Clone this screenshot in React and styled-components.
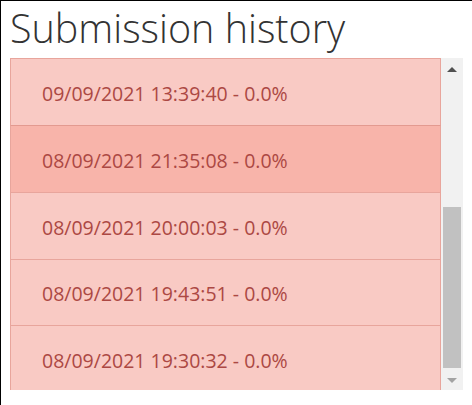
import React, { useLayoutEffect, useRef } from 'react';
import styled, { createGlobalStyle } from 'styled-components';

const GlobalStyle = createGlobalStyle`
  html, body {
    margin: 0;
    padding: 0;
    background: #ffffff;
  }
  body {
    font-family: 'Open Sans', 'Liberation Sans', sans-serif;
  }
`;

const Frame = styled.div`
  box-sizing: border-box;
  width: 472px;
  height: 405px;
  border-left: 1px solid #000;
  border-top: 1px solid #000;
  padding: 0 0 0 9px;
  background: #fff;
`;

const Title = styled.h1`
  box-sizing: border-box;
  margin: 0;
  height: 57px;
  padding-top: 2px;
  font-family: 'Open Sans', sans-serif;
  font-weight: 300;
  font-size: 39.5px;
  line-height: 50px;
  color: #333333;
  white-space: nowrap;
`;

const History = styled.div`
  display: flex;
  height: 332px;
  width: 453px;
`;

const List = styled.div`
  width: 431px;
  height: 100%;
  overflow-y: auto;
  scrollbar-width: none;
  &::-webkit-scrollbar {
    display: none;
  }
`;

const Item = styled.div`
  box-sizing: border-box;
  height: 66.8px;
  display: flex;
  align-items: center;
  padding: 3px 0 0 31px;
  border: 1px solid #e8a59c;
  border-bottom: 0;
  background: ${p => (p.active ? '#f8b4aa' : '#f9cac4')};
  border-top-color: ${p => (p.active ? '#e39a90' : '#e8a59c')};
  color: #ac4843;
  font-size: 19.5px;
  font-family: 'Open Sans', sans-serif;
  white-space: nowrap;
`;

const Scrollbar = styled.div`
  width: 22px;
  display: flex;
  flex-direction: column;
  background: #f1f1f1;
`;

const ArrowButton = styled.div`
  height: 22px;
  flex: none;
  display: flex;
  align-items: center;
  justify-content: center;
  padding-top: ${p => (p.down ? '2px' : '0')};
  box-sizing: border-box;
`;

const Track = styled.div`
  flex: 1;
  display: flex;
  flex-direction: column;
  justify-content: flex-end;
  padding: 0 2px;
`;

const Thumb = styled.div`
  height: 161px;
  background: #c1c1c1;
`;

const submissions = [
  { date: '10/09/2021 09:12:27', score: '0.0%' },
  { date: '09/09/2021 22:48:03', score: '0.0%' },
  { date: '09/09/2021 18:05:51', score: '0.0%' },
  { date: '09/09/2021 14:21:16', score: '0.0%' },
  { date: '09/09/2021 13:39:40', score: '0.0%' },
  { date: '08/09/2021 21:35:08', score: '0.0%', active: true },
  { date: '08/09/2021 20:00:03', score: '0.0%' },
  { date: '08/09/2021 19:43:51', score: '0.0%' },
  { date: '08/09/2021 19:30:32', score: '0.0%' },
];

export default function App() {
  const listRef = useRef(null);

  useLayoutEffect(() => {
    // scrolled down to the oldest entries
    if (listRef.current) listRef.current.scrollTop = 267;
  }, []);

  return (
    <>
      <GlobalStyle />
      <Frame>
        <Title>Submission history</Title>
        <History>
          <List ref={listRef}>
            {submissions.map(s => (
              <Item key={s.date} active={s.active}>
                {s.date} - {s.score}
              </Item>
            ))}
          </List>
          <Scrollbar>
            <ArrowButton>
              <svg width="10" height="5" viewBox="0 0 10 5">
                <path d="M0 5 L5 0 L10 5 Z" fill="#505050" />
              </svg>
            </ArrowButton>
            <Track>
              <Thumb />
            </Track>
            <ArrowButton down>
              <svg width="10" height="5" viewBox="0 0 10 5">
                <path d="M0 0 L10 0 L5 5 Z" fill="#a3a3a3" />
              </svg>
            </ArrowButton>
          </Scrollbar>
        </History>
      </Frame>
    </>
  );
}
